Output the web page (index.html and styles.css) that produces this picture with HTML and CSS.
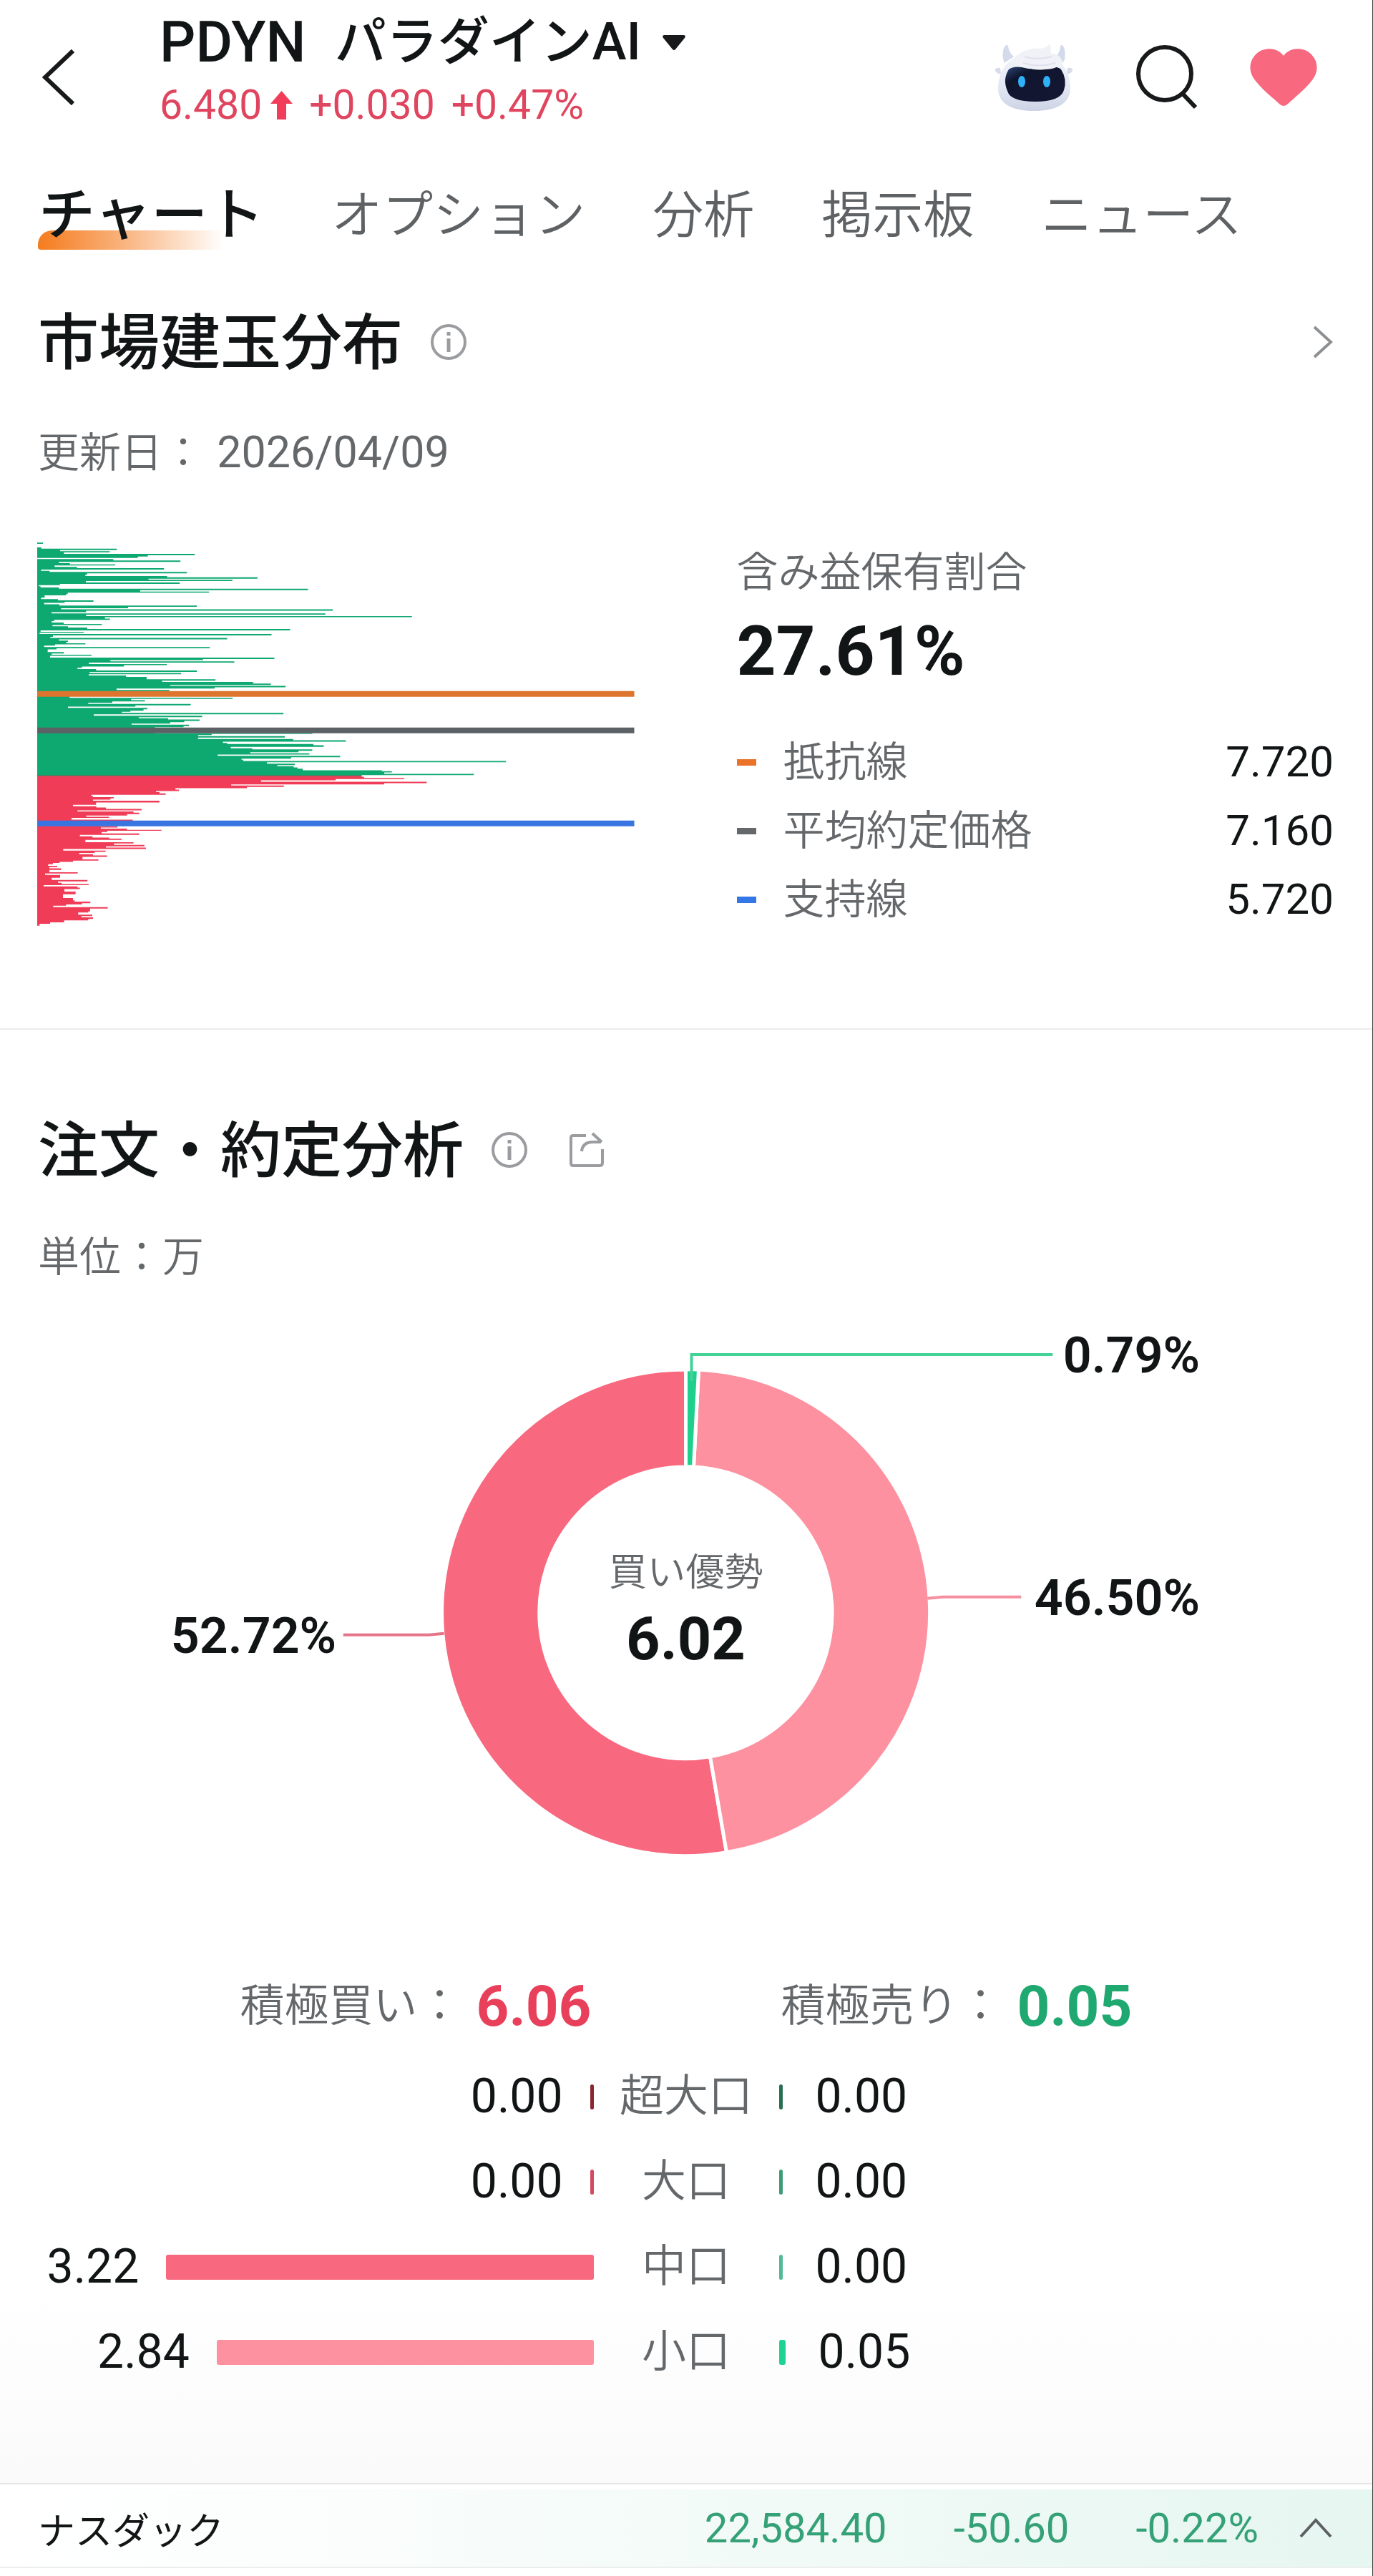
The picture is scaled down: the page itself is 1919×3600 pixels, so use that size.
FILE: index.html
```html
<!DOCTYPE html>
<html lang="ja">
<head>
<meta charset="utf-8">
<meta name="viewport" content="width=device-width, initial-scale=1">
<title>PDYN パラダインAI</title>
<link rel="stylesheet" href="styles.css">
</head>
<body>
<header class="topbar">
  <button class="icon-button back" aria-label="戻る">
    <svg width="46" height="80" viewBox="0 0 46 80"><path d="M43 3 4 40l39 37" fill="none" stroke="#17191a" stroke-width="6"/></svg>
  </button>
  <div class="stock">
    <h1 class="stock-name"><span class="symbol">PDYN</span><span>パラダインAI</span>
      <svg class="caret" width="32" height="21" viewBox="0 0 32 21"><path d="M2 0h28q3 1 1 4L18 20q-2 2-4 0L1 4Q-1 1 2 0z" fill="#17191a"/></svg>
    </h1>
    <p class="quote"><span class="price">6.480<svg width="31" height="40" viewBox="0 0 31 40"><path d="M15.500 0 31 18H22V40H9V18H0z" fill="#f23d5a"/></svg></span><span>+0.030</span><span>+0.47%</span></p>
  </div>
  <div class="actions">
    <button class="icon-button assistant" aria-label="AIアシスタント">
      <svg width="110" height="94" viewBox="0 0 110 94">
        <defs>
          <linearGradient id="shell" x1="0" y1="0" x2="0" y2="1"><stop offset="0" stop-color="#f4f5fa"/><stop offset=".6" stop-color="#e3e7f3"/><stop offset="1" stop-color="#ccd3e4"/></linearGradient>
          <linearGradient id="visor" x1="0" y1="0" x2="1" y2="1"><stop offset="0" stop-color="#2c4778"/><stop offset=".25" stop-color="#10152e"/><stop offset="1" stop-color="#151733"/></linearGradient>
        </defs>
        <path d="M12 22Q10 8 16 2q2-1 3 2 2 10 8 14L14 27zM98 22Q100 8 95 2q-2-1-3 2-1 10-7 14l10 9z" fill="#d3dbea"/>
        <path d="M8 34Q0 33 1 38q3 5 8 4zM102 34q8-1 7 4-3 5-8 4z" fill="#d6dcea"/>
        <path d="M55 13C24 13 5 34 5 62c0 22 19 32 50 32s51-10 51-32C106 34 87 13 55 13z" fill="url(#shell)"/>
        <path d="M20 36q6-5 18-3 18 5 38 0 12-2 17 3 9 14 4 29-5 16-40 16T18 66q-7-16 2-30z" fill="url(#visor)"/>
        <path d="M25 23Q40 5 63 7 73 6 77 0q3 6 1 13 13 1 17 12-6 11-25 11-13 2-25-3-12 1-20-10z" fill="#f1f2f7"/>
        <path d="M42 18q16 6 38 0M40 27q22 7 45 0" fill="none" stroke="#dfe2ec" stroke-width="2"/>
        <ellipse cx="38" cy="53" rx="5" ry="8" fill="#2fb1f5"/><ellipse cx="73" cy="53" rx="5" ry="8" fill="#2fb1f5"/>
      </svg>
    </button>
    <button class="icon-button" aria-label="検索">
      <svg width="88" height="92" viewBox="0 0 88 92"><circle cx="41" cy="41" r="37" fill="none" stroke="#17191a" stroke-width="6"/><path d="M65 68 84 88" stroke="#17191a" stroke-width="6"/></svg>
    </button>
    <button class="icon-button" aria-label="お気に入り">
      <svg width="94" height="80" viewBox="0 0 94 80"><path d="M47 10C39-1 24-2 13 4-2 14-3 32 7 44c10 13 23 23 35 34q5 4 10 0c12-11 25-21 35-34 10-12 9-30-6-40C70-2 55-1 47 10z" fill="#f8687f"/></svg>
    </button>
  </div>
</header>

<nav class="tabs">
  <a class="tab active" href="#chart">チャート</a>
  <a class="tab" href="#options">オプション</a>
  <a class="tab" href="#analysis">分析</a>
  <a class="tab" href="#board">掲示板</a>
  <a class="tab" href="#news">ニュース</a>
</nav>

<main>
  <section class="section distribution">
    <div class="section-head">
      <h2>市場建玉分布</h2>
      <button class="icon-button" aria-label="説明">
        <svg width="50" height="50" viewBox="0 0 50 50"><circle cx="25" cy="25" r="23" fill="none" stroke="#9a9c9f" stroke-width="4"/><path d="M25 11v5M25 20v19" stroke="#9a9c9f" stroke-width="5"/></svg>
      </button>
      <button class="icon-button more" aria-label="詳細">
        <svg width="30" height="46" viewBox="0 0 30 46"><path d="M3 2l23 21L3 44" fill="none" stroke="#8d9093" stroke-width="4"/></svg>
      </button>
    </div>
    <p class="note">更新日： <span class="date">2026/04/09</span></p>
    <div class="columns">
      <svg class="histogram" viewBox="36 54 2505 1610" role="img" aria-label="建玉分布">
        <path fill="#0ea871" d="M36 55H60V60H36V75H53V80H370V86H132V91H340V96H148V102H697V108H500V113H458V119H36V124H355V130H637V136H127V141H173V146H363V151H109V157H203V162H568V168H52V173H88V178H664V184H245V190H238V195H581V200H960V206H503V211H855V216H240V222H634V228H131V233H43V238H50V243H127V248H1172V254H468V260H757V265H164V271H157V276H67V286H52V292H123V297H272V303H151V308H65V314H129V319H706V324H417V330H136V335H1276V341H241V347H96V352H1245V357H241V363H1608V368H320V374H341V379H107V384H97V390H147V396H307V401H100V406H165V411H246V417H1097V423H50V429H231V433H46V438H1019V444H102V450H91V455H833V461H127V466H165V471H158V477H238V482H111V487H65V493H760V498H117V503H80V514H148V520H97V525H264V530H90V537H1031V543H732V548H343V553H863V558H253V564H580V569H400V575H224V580H205V585H283V591H706V597H256V602H640V607H252V612H409V618H495V628H784V634H560V639H942V646H1016V652H594V656H1078V662H781V667H369V673H590V679H172V706H856V711H430V716H488V721H351V727H250V732H680V738H448V743H165V748H498V754H482V760H427V765H391V769H1069V775H273V781H728V787H462V792H585V797H717V803H653V808H594V814H432V819H673V825H650V829H530V855H1190V858H768V862H711V867H1075V873H711V879H1110V884H1331V890H815V895H833V900H1195V905H1238V912H848V918H938V922H1190V928H1132V934H930V939H1178V944H793V949H1307V955H1101V961H893V966H900V971H2003V976H1000V982H1117V988H1043V993H1112V998H1128V1003H1150V1010H1482V1014H1524V1019H1492V1025H1868V1030H1397V1033H36Z"/>
        <path fill="#f03c57" d="M36 1033H1397V1037H1407V1042H1576V1047H1288V1052H975V1058H1670V1064H1492V1069H850V1074H1071V1080H916V1085H616V1091H631V1097H535V1102H549V1107H575V1113H263V1118H270V1123H357V1128H343V1133H270V1138H549V1145H283V1155H186V1161H284V1166H324V1172H474V1178H205V1183H440V1188H464V1194H413V1200H242V1205H338V1210H180V1217H437V1222H300V1245H373V1250H303V1255H412V1260H557V1264H330V1269H306V1275H464V1281H215V1287H268V1292H338V1297H390V1302H238V1312H440V1317H358V1323H486V1329H324V1334H492V1340H145V1347H323V1352H277V1357H212V1362H270V1367H329V1373H226V1384H293V1389H186V1394H130V1399H102V1404H82V1411H120V1416H87V1421H136V1428H87V1438H206V1443H69V1449H132V1461H97V1470H247V1476H123V1482H138V1487H252V1492H63V1497H205V1502H215V1508H150V1519H197V1530H144V1546H186V1556H193V1561H259V1568H224V1573H157V1578H103V1584H332V1590H258V1602H250V1607H208V1616H267V1622H221V1627H270V1634H250V1640H149V1648H90V1654H46V1662H36Z"/>
        <path stroke="#7b5a50" stroke-width="3" d="M36 1033H1397"/>
        <path stroke="#de752f" stroke-width="24" d="M36 690H2541"/>
        <path stroke="#5c6166" stroke-width="24" d="M36 843H2541"/>
        <path stroke="#3975e0" stroke-width="24" d="M36 1233H2541"/>
      </svg>
      <div class="summary">
        <p class="summary-label">含み益保有割合</p>
        <p class="summary-value">27.61%</p>
        <dl class="levels">
          <div class="level resistance"><dt>抵抗線</dt><dd>7.720</dd></div>
          <div class="level average"><dt>平均約定価格</dt><dd>7.160</dd></div>
          <div class="level support"><dt>支持線</dt><dd>5.720</dd></div>
        </dl>
      </div>
    </div>
  </section>

  <section class="orders">
    <div class="section">
      <div class="section-head">
        <h2>注文・約定分析</h2>
        <button class="icon-button" aria-label="説明">
          <svg width="50" height="50" viewBox="0 0 50 50"><circle cx="25" cy="25" r="23" fill="none" stroke="#9a9c9f" stroke-width="4"/><path d="M25 11v5M25 20v19" stroke="#9a9c9f" stroke-width="5"/></svg>
        </button>
        <button class="icon-button share" aria-label="共有">
          <svg width="48" height="50" viewBox="0 0 48 50"><path d="M23 5H5Q2 5 2 8V43q0 4 3 4H42q4 0 4-4V24" fill="none" stroke="#9a9c9f" stroke-width="4"/><path d="M17 27Q18 15 31 14H44M32 2 45 14" fill="none" stroke="#9a9c9f" stroke-width="4"/></svg>
        </button>
      </div>
      <p class="note">単位：万</p>
    </div>
    <svg class="donut" viewBox="0 0 1919 760" role="img" aria-label="買い優勢 6.02">
      <g stroke="#fff" stroke-width="5">
        <path fill="#f8687f" d="M959 64A340 340 0 1 0 1016 739L993 605A204 204 0 1 1 959 200Z"/>
        <path fill="#fe91a0" d="M977 64A340 340 0 0 1 1016 739L993 605A204 204 0 0 0 970 200Z"/>
        <path fill="#1fd08c" d="M959 64A340 340 0 0 1 977 64L970 200A204 204 0 0 0 959 200Z"/>
      </g>
      <g fill="none" stroke-width="4">
        <path stroke="#43d298" d="M967 80V43H1472"/>
        <path stroke="#f690a0" d="M1297 384 1319 382H1428"/>
        <path stroke="#e5748a" d="M480 435H600L621 433"/>
      </g>
      <g class="share-label">
        <text x="1678" y="68" text-anchor="end">0.79%</text>
        <text x="1678" y="407" text-anchor="end">46.50%</text>
        <text x="239" y="460">52.72%</text>
      </g>
      <text class="donut-caption" x="959" y="366" text-anchor="middle">買い優勢</text>
      <text class="donut-value" x="959" y="469" text-anchor="middle">6.02</text>
    </svg>

    <table class="flows">
      <colgroup><col><col class="mid"><col></colgroup>
      <thead>
        <tr>
          <th><div class="side buy">積極買い：<strong>6.06</strong></div></th>
          <td></td>
          <th><div class="side sell">積極売り：<strong>0.05</strong></div></th>
        </tr>
      </thead>
      <tbody>
        <tr><td><div class="side buy">0.00<i class="tick huge"></i></div></td><th>超大口</th><td><div class="side sell"><i class="tick huge"></i>0.00</div></td></tr>
        <tr><td><div class="side buy">0.00<i class="tick large"></i></div></td><th>大口</th><td><div class="side sell"><i class="tick large"></i>0.00</div></td></tr>
        <tr><td><div class="side buy">3.22<i class="tick medium" style="width:72%"></i></div></td><th>中口</th><td><div class="side sell"><i class="tick medium"></i>0.00</div></td></tr>
        <tr><td><div class="side buy">2.84<i class="tick small" style="width:63.5%"></i></div></td><th>小口</th><td><div class="side sell"><i class="tick small" style="width:1.1%"></i>0.05</div></td></tr>
      </tbody>
    </table>
  </section>
</main>

<footer class="ticker-bar">
  <div class="ticker">
    <span class="index-name">ナスダック</span>
    <span>22,584.40</span>
    <span>-50.60</span>
    <span>-0.22%</span>
    <button class="icon-button" aria-label="展開">
      <svg width="46" height="30" viewBox="0 0 46 30"><path d="M2 27 23 4l21 23" fill="none" stroke="#5d6063" stroke-width="4"/></svg>
    </button>
  </div>
</footer>
</body>
</html>
```
FILE: styles.css
```css
* {
  box-sizing: border-box;
}

body,
h1,
h2,
p,
dl,
dd {
  margin: 0;
}

body {
  min-height: 100vh;
  display: flex;
  flex-direction: column;
  background: #fff;
  border-right: 1px solid #3a3c3e;
  color: #121516;
  font-family: Roboto, "Noto Sans CJK JP", sans-serif;
}

svg {
  display: block;
  flex: none;
}

.icon-button {
  display: block;
  padding: 0;
  border: 0;
  background: none;
}

/* Top bar */
.topbar {
  display: flex;
  align-items: center;
  min-height: 202px;
  padding: 13px 77px 0 59px;
}

.stock {
  align-self: flex-start;
  margin-left: 118px;
}

.stock-name {
  display: flex;
  align-items: center;
  gap: 40px;
  padding-top: 2px;
  font-size: 72px;
  line-height: 88px;
  font-weight: 500;
}

.symbol {
  font-size: 79px;
}

.caret {
  margin-left: -10px;
}

.quote {
  display: flex;
  gap: 23px;
  margin-top: 9px;
  font-size: 57px;
  line-height: 70px;
  color: #e0455f;
}

.price {
  display: flex;
  align-items: center;
  gap: 12px;
}

.actions {
  display: flex;
  align-items: center;
  gap: 72px;
  margin-left: auto;
}

.assistant {
  margin-right: 15px;
}

/* Tabs */
.tabs {
  display: flex;
  gap: 94px;
  margin-top: 36px;
  padding: 0 54px;
}

.tab {
  position: relative;
  z-index: 0;
  padding-top: 6px;
  font-size: 71px;
  line-height: 114px;
  font-weight: 350;
  color: #5f6265;
  text-decoration: none;
  white-space: nowrap;
}

.tab.active {
  font-size: 79px;
  font-weight: 500;
  color: #121516;
}

.tab.active::before {
  content: "";
  position: absolute;
  z-index: -1;
  left: -1px;
  bottom: 9px;
  width: 260px;
  height: 27px;
  border-radius: 20px 0 0 4px;
  background: linear-gradient(90deg, #f57c1f, #f9b27c 45%, #fff);
}

/* Sections */
.section {
  padding: 0 54px 0 52px;
}

.section-head {
  display: flex;
  align-items: center;
}

h2 {
  margin: 0 39px 0 1px;
  padding-top: 4px;
  font-size: 85px;
  line-height: 116px;
  font-weight: 500;
}

.more {
  margin-left: auto;
}

.share {
  margin-left: 59px;
}

.note {
  padding: 2px 0 0 1px;
  font-size: 58px;
  line-height: 78px;
  font-weight: 350;
  color: #65686b;
}

.date {
  margin-left: 4px;
  font-size: 61px;
  font-weight: 400;
}

.distribution {
  padding-top: 60px;
  padding-bottom: 132px;
  border-bottom: 2px solid #ececec;
}

.distribution .note {
  margin-top: 53px;
}

.columns {
  display: grid;
  grid-template-columns: 1fr 1fr;
  gap: 143px;
  margin-top: 86px;
}

.histogram {
  width: 100%;
}

.summary-label {
  padding-top: 4px;
  font-size: 58px;
  line-height: 76px;
  font-weight: 350;
  color: #65686b;
}

.summary-value {
  margin-top: 16px;
  font-size: 96px;
  line-height: 112px;
  font-weight: 700;
}

.levels {
  margin-top: 51px;
}

.level {
  display: flex;
  align-items: center;
  font-size: 60px;
  line-height: 96px;
}

.level::before {
  content: "";
  width: 27px;
  height: 9px;
  margin-right: 38px;
  background: #65686b;
}

.resistance::before {
  background: #ea7329;
}

.support::before {
  background: #3576e6;
}

.level dt {
  font-size: 58px;
  font-weight: 350;
  color: #65686b;
}

.level dd {
  margin-left: auto;
}

.orders {
  padding-top: 108px;
}

.orders .note {
  margin-top: 49px;
}

.donut {
  width: 100%;
  margin-top: 54px;
}

.share-label {
  font-size: 70px;
  font-weight: 600;
  fill: #121516;
}

.donut-caption {
  font-size: 54px;
  font-weight: 350;
  fill: #65686b;
}

.donut-value {
  font-size: 83px;
  font-weight: 700;
  fill: #121516;
}

/* Order flow table */
.flows {
  width: 100%;
  margin-top: 154px;
  border-collapse: collapse;
  table-layout: fixed;
  font-size: 66px;
  line-height: 80px;
}

.mid {
  width: 259px;
}

.flows th,
.flows td {
  height: 119px;
  padding: 0;
}

.flows th {
  font-size: 62px;
  font-weight: 350;
  color: #65686b;
}

.flows thead th,
.flows thead td {
  height: 107px;
  padding-bottom: 27px;
}

.flows strong {
  font-size: 80px;
  font-weight: 700;
}

.side {
  display: flex;
  align-items: center;
  gap: 38px;
}

.buy {
  justify-content: flex-end;
}

thead .side {
  gap: 20px;
  padding: 0 3px;
}

thead .buy strong {
  color: #e83f5a;
}

thead .sell strong {
  color: #20a871;
}

.tick {
  width: 5px;
  height: 35px;
  border-radius: 3px;
}

.sell .tick {
  margin-right: 8px;
}

.buy .huge {
  background: #8c2632;
}

.buy .large {
  background: #d34a61;
}

.buy .medium {
  background: #f8687f;
}

.buy .small {
  background: #fe91a0;
}

.sell .huge {
  background: #2b6f53;
}

.sell .large {
  background: #3f9c77;
}

.sell .medium {
  background: #52ba96;
}

.sell .small {
  background: #1fd492;
}

main {
  flex: 1;
  background: linear-gradient(#fff, #fff) top / 100% calc(100% - 280px) no-repeat,
    linear-gradient(#fff, #fafafa) bottom / 100% 280px no-repeat;
}

/* Index ticker */
.ticker-bar {
  padding: 7px 0 11px;
  border-top: 2px solid #e6e6e7;
}

.ticker {
  display: flex;
  align-items: center;
  gap: 93px;
  height: 110px;
  padding: 0 56px 0 53px;
  border-bottom: 2px solid #ebeeed;
  background: linear-gradient(90deg, #fff, #fafdfc 25%, #e6f6f1);
  font-size: 58px;
  color: #35a177;
}

.index-name {
  margin-right: auto;
  font-size: 52px;
  color: #121516;
}

.ticker .icon-button {
  margin-left: -36px;
}
```
